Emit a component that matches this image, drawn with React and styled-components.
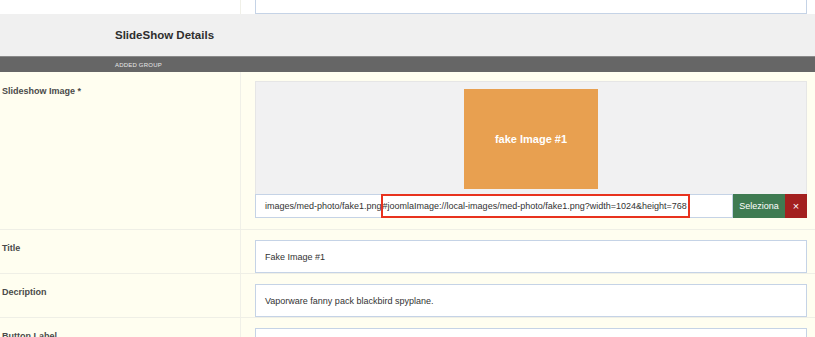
import styled, { createGlobalStyle } from "styled-components";

const Global = createGlobalStyle`
  html, body {
    margin: 0;
    padding: 0;
    background: #fff;
  }
  body {
    font-family: "Liberation Sans", Arial, sans-serif;
    color: #333;
    overflow: hidden;
  }
`;

const Page = styled.div`
  width: 815px;
  height: 337px;
  overflow: hidden;
`;

const Row = styled.div`
  display: grid;
  grid-template-columns: 241px 1fr;
  background: ${({ $bg }) => $bg || "#fffef0"};
  border-top: ${({ $line }) => ($line ? "1px solid #efefe6" : "none")};
  height: ${({ $h }) => $h}px;
  overflow: hidden;
  box-sizing: border-box;
`;

const Label = styled.div`
  border-right: 1px solid #f0f0e8;
  padding: ${({ $top }) => $top || 13}px 0 0 2px;
  font-size: 9px;
  font-weight: bold;
  color: #4a4a4a;
`;

const Field = styled.div`
  padding: ${({ $top }) => $top ?? 10}px 8px 0 14px;
  display: flex;
  flex-direction: column;
`;

const TextBox = styled.div`
  height: 24px;
  box-sizing: border-box;
  border: 1px solid #c5d3e6;
  background: #fff;
  padding-left: 9px;
  font-size: 9px;
  color: #333;
  display: flex;
  align-items: center;
  white-space: nowrap;
  flex: 1;
  margin-top: ${({ $mt }) => $mt || 0}px;
`;

const Header = styled.div`
  height: 42px;
  background: #f0f0f0;
  display: flex;
  align-items: center;
  padding-left: 115px;
  font-size: 11.5px;
  font-weight: bold;
  color: #2e2e2e;
`;

const GroupBar = styled.div`
  height: 16px;
  box-sizing: border-box;
  background: #666;
  border-top: 1px solid #8a8a8a;
  display: flex;
  align-items: center;
  padding-left: 115px;
  font-size: 6px;
  color: #e8e8e8;
  letter-spacing: 0.2px;
`;

const MediaBox = styled.div`
  background: #f1f1f2;
  border: 1px solid #e6e6e6;
  border-bottom: none;
  height: 113px;
  display: flex;
  justify-content: center;
  padding-top: 7px;
  box-sizing: border-box;
`;

const Preview = styled.div`
  width: 134px;
  height: 100px;
  background: #e8a050;
  color: #fff;
  font-size: 11px;
  font-weight: bold;
  display: flex;
  align-items: center;
  justify-content: center;
`;

const MediaBar = styled.div`
  display: flex;
  height: 24px;
`;

const Highlight = styled.span`
  display: inline-flex;
  align-items: center;
  height: 24px;
  box-sizing: border-box;
  border: 2px solid #e8321e;
  padding-right: 1px;
  margin-left: -1px;
`;

const Button = styled.div`
  width: ${({ $w }) => $w}px;
  background: ${({ $bg }) => $bg};
  color: #fff;
  font-size: ${({ $fs }) => $fs || 9}px;
  display: flex;
  align-items: center;
  justify-content: center;
`;

export default function App() {
  return (
    <Page>
      <Global />
      <Row $bg="#fff" $h={14}>
        <Label />
        <Field $top={0}>
          <TextBox $mt={-20} />
        </Field>
      </Row>
      <Header>SlideShow Details</Header>
      <GroupBar>ADDED GROUP</GroupBar>
      <Row $h={157}>
        <Label $top={14}>Slideshow Image *</Label>
        <Field $top={9}>
          <MediaBox>
            <Preview>fake Image #1</Preview>
          </MediaBox>
          <MediaBar>
            <TextBox>
              images/med-photo/fake1.png
              <Highlight>#joomlaImage://local-images/med-photo/fake1.png?width=1024&amp;height=768</Highlight>
            </TextBox>
            <Button $w={52} $bg="#3f7b52">Seleziona</Button>
            <Button $w={22} $bg="#a3201f" $fs={11}>×</Button>
          </MediaBar>
        </Field>
      </Row>
      <Row $line $h={44}>
        <Label>Title</Label>
        <Field>
          <TextBox>Fake Image #1</TextBox>
        </Field>
      </Row>
      <Row $line $h={44}>
        <Label>Decription</Label>
        <Field>
          <TextBox>Vaporware fanny pack blackbird spyplane.</TextBox>
        </Field>
      </Row>
      <Row $line $h={44}>
        <Label>Button Label</Label>
        <Field>
          <TextBox>Button 1</TextBox>
        </Field>
      </Row>
    </Page>
  );
}
